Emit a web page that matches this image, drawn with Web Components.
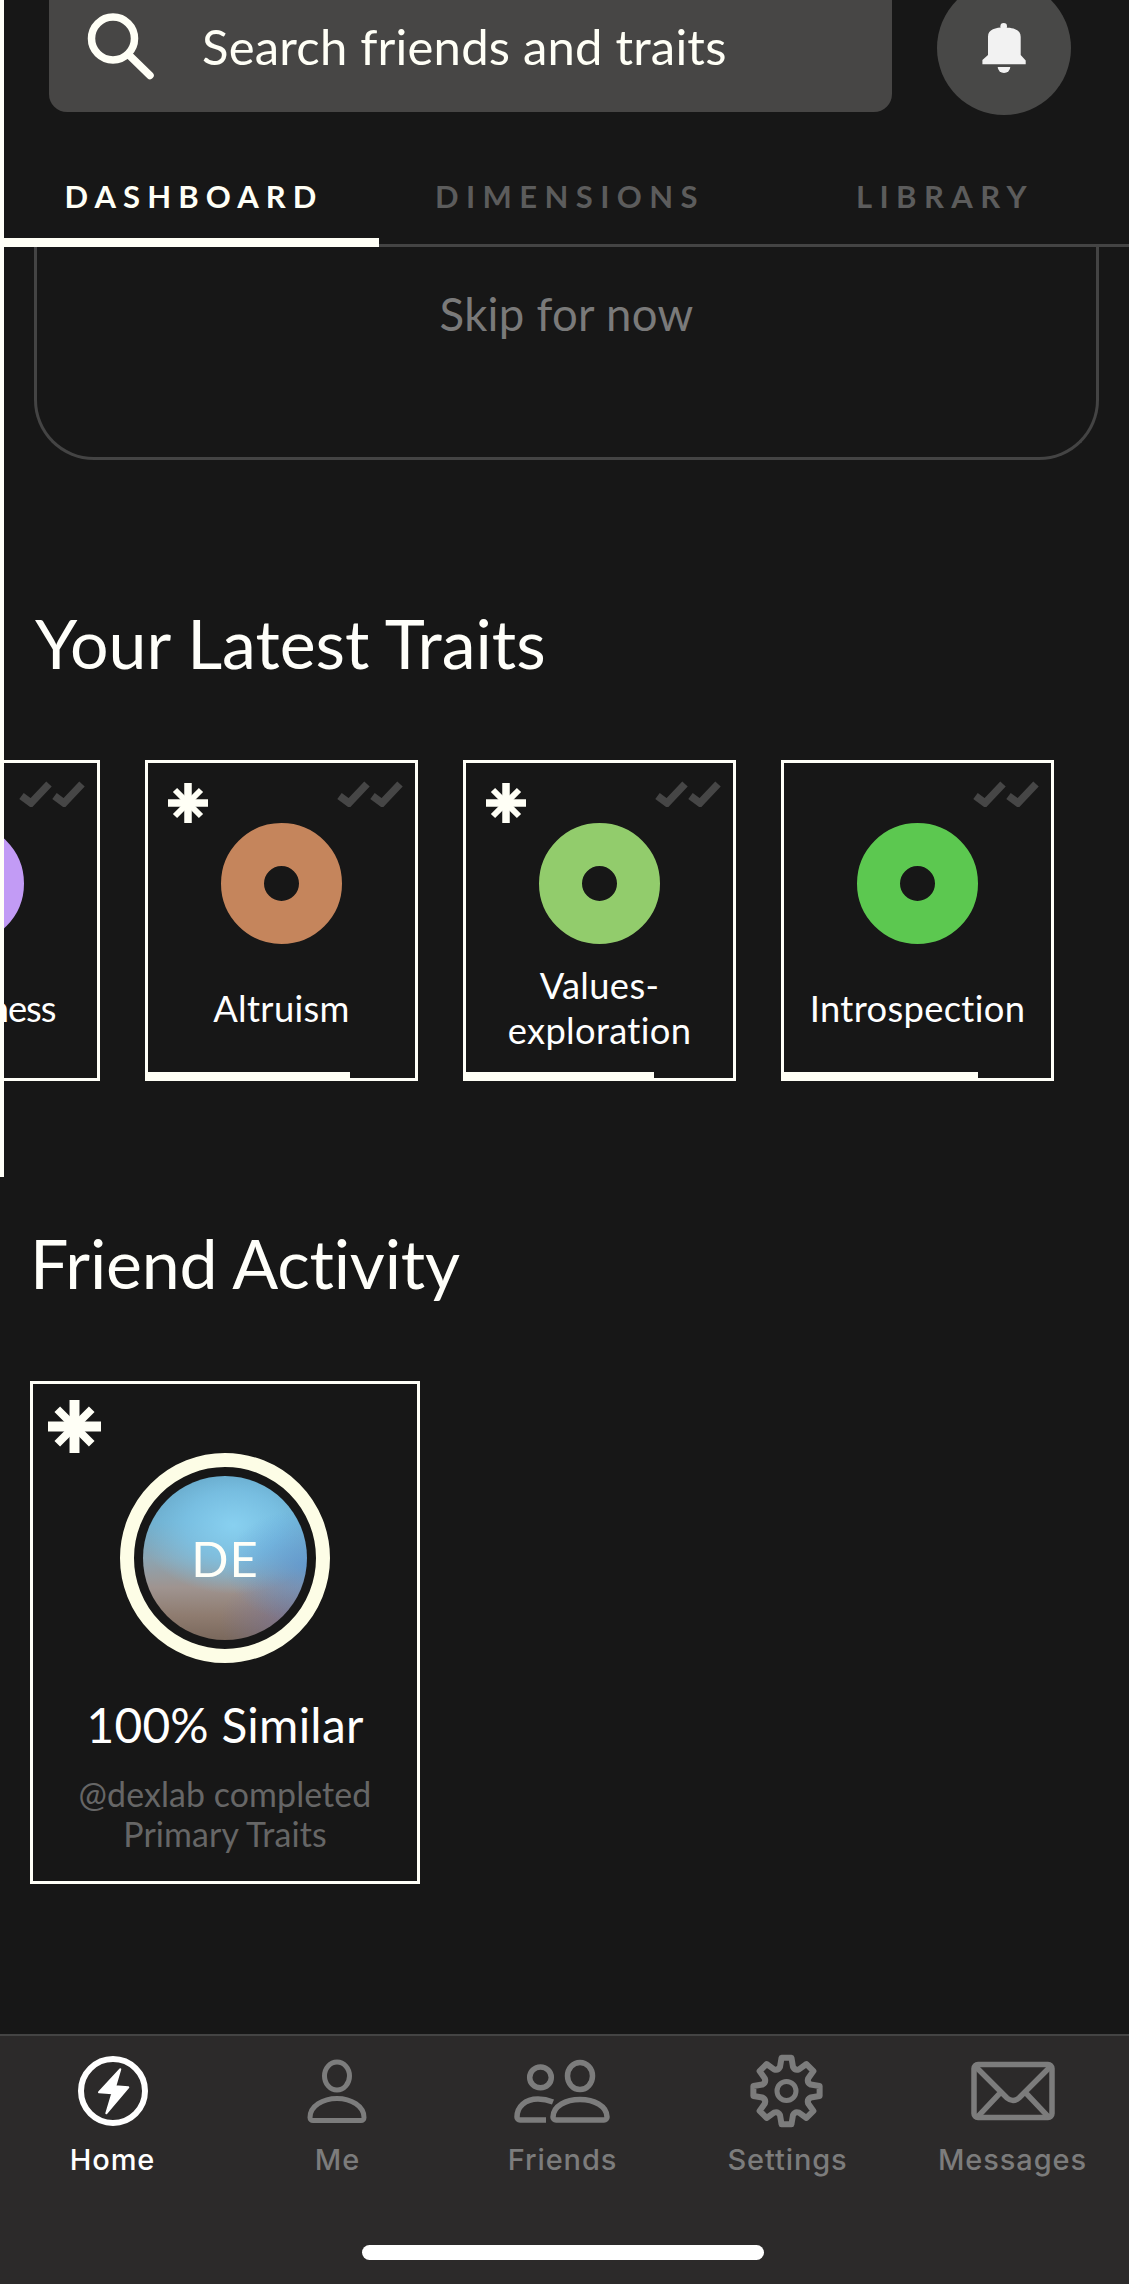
<!doctype html>
<html>
<head>
<meta charset="utf-8">
<title>Dashboard</title>
<style>
  html, body { margin: 0; height: 2284px; overflow: hidden; background: #171717; }
  body { font-family: Lato, "Liberation Sans", sans-serif; color: #fff; }
</style>
</head>
<body>
<top-panel>
  <search-header placeholder="Search friends and traits"></search-header>
  <tab-strip>
    <tab-link active>DASHBOARD</tab-link>
    <tab-link>DIMENSIONS</tab-link>
    <tab-link>LIBRARY</tab-link>
  </tab-strip>
  <skip-card>Skip for now</skip-card>
  <section-title style="margin:143px 0 0 31px">Your Latest Traits</section-title>
  <trait-row>
    <trait-card color="#c29bf5" progress="40"><span style="letter-spacing:-1px">Mindfulness</span></trait-card>
    <trait-card color="#c5855c" progress="76.8" star>Altruism</trait-card>
    <trait-card color="#92cc6c" progress="71.5" star>Values-exploration</trait-card>
    <trait-card color="#5cc850" progress="73.8">Introspection</trait-card>
  </trait-row>
</top-panel>
<section-title style="margin:46px 0 0 30px;letter-spacing:-.2px">Friend Activity</section-title>
<friend-card initials="DE" title-text="100% Similar">@dexlab completed Primary Traits</friend-card>
<nav-bar>
  <nav-item icon="home" active>Home</nav-item>
  <nav-item icon="me">Me</nav-item>
  <nav-item icon="friends">Friends</nav-item>
  <nav-item icon="settings">Settings</nav-item>
  <nav-item icon="messages">Messages</nav-item>
</nav-bar>

<script>
const STAR = `<svg viewBox="0 0 40 40" width="100%" height="100%" fill="none" stroke="#fffff6">
  <path stroke-width="7.5" d="M20 0V40M0 20H40"/>
  <path stroke-width="6" d="M7 7L33 33M33 7L7 33"/></svg>`;

function gearPath() {
  const pt = (deg, r) => {
    const a = (deg - 90) * Math.PI / 180;
    return `${(48.5 + r * Math.cos(a)).toFixed(2)} ${(38 + r * Math.sin(a)).toFixed(2)}`;
  };
  let d = '';
  for (let i = 0; i < 8; i++) {
    const t = i * 45;
    d += `${i ? 'Q' + pt(t - 22.5, 22) + ' ' : 'M'}${pt(t - 15, 25)}L${pt(t - 8.5, 33.5)}L${pt(t + 8.5, 33.5)}L${pt(t + 15, 25)}`;
  }
  return d + `Q${pt(-22.5, 22)} ${pt(-15, 25)}Z`;
}

const ICONS = {
  home: `<circle cx="40" cy="38" r="32" fill="none" stroke="currentColor" stroke-width="6"/>
    <path d="M47.3 16.3L26 39.3L39.3 40.3L33.3 60.3L55.3 34.3L42.3 33.3Z" fill="currentColor" stroke="currentColor" stroke-width="2" stroke-linejoin="round"/>`,
  me: `<g fill="none" stroke="currentColor" stroke-width="5">
    <ellipse cx="39" cy="23" rx="12.5" ry="14"/>
    <path d="M15 67.5H63a3 3 0 0 0 3-3C66 53 53 45.5 39 45.5S12 53 12 64.5a3 3 0 0 0 3 3Z"/></g>`,
  friends: `<g fill="none" stroke="currentColor" stroke-width="5.5">
    <ellipse cx="27.5" cy="24.4" rx="10.8" ry="10.4"/>
    <ellipse cx="67" cy="23" rx="12.5" ry="13.5"/>
    <path d="M43 67H91a3 3 0 0 0 3-3C94 53 81 46.5 67 46.5S40 53 40 64a3 3 0 0 0 3 3Z"/>
    <path d="M40 49C35 47 30 46 25 46C12 46 4 54 4 64a3 3 0 0 0 3 3H33"/></g>`,
  settings: `<g fill="none" stroke="currentColor" stroke-width="6" stroke-linejoin="round">
    <path d="${gearPath()}"/><circle cx="48.5" cy="38" r="9.5" stroke-width="5"/></g>`,
  messages: `<g fill="none" stroke="currentColor" stroke-width="5.5">
    <rect x="11" y="11.5" width="78" height="53" rx="4"/>
    <path d="M13 14L44 45q6 5 12 0L87 14M14.8 63.7L38.4 38.7M85.2 63.7L61.6 38.7"/></g>`
};

class TopPanel extends HTMLElement {
  connectedCallback() {
    this.attachShadow({ mode: 'open' }).innerHTML = `
      <style>
        :host { display: flex; flex-direction: column; height: 1177px; overflow: hidden;
          border-left: 4px solid #fffff8; box-sizing: border-box; background: #171717; }
      </style>
      <slot></slot>`;
  }
}

class SearchHeader extends HTMLElement {
  connectedCallback() {
    this.attachShadow({ mode: 'open' }).innerHTML = `
      <style>
        :host { display: flex; flex: none; gap: 45px; margin: -19px 0 0 45px; }
        .box { width: 843px; height: 131px; box-sizing: border-box; padding: 0 0 1px 35px;
          display: flex; align-items: center; gap: 38px; background: #474645; border-radius: 0 0 18px 18px;
          font-size: 49px; line-height: 59px; letter-spacing: .2px; color: #fffff6; }
        .box svg { margin-bottom: -1px; }
        .bell { width: 134px; height: 134px; border-radius: 50%; background: #484847;
          display: flex; align-items: center; justify-content: center; }
      </style>
      <div class="box">
        <svg width="80" height="80" viewBox="0 0 80 80" fill="none" stroke="#fffff6" stroke-width="7.5" stroke-linecap="round">
          <circle cx="29" cy="31.5" r="21.5"/><path d="M45 48L66 68.5"/>
        </svg>
        <span>${this.getAttribute('placeholder')}</span>
      </div>
      <div class="bell">
        <svg width="44" height="50" viewBox="0 0 44 50" fill="#f2f2f2">
          <circle cx="21.7" cy="3.3" r="3.3"/>
          <path d="M6 13.7C6 6 14 4.5 21.7 4.5C30 4.5 38.7 6 38.7 13.7V32L43.7 37.5V41.3H0.4V37L6 32Z"/>
          <path d="M15.7 44H28.3A6.3 6 0 0 1 15.7 44Z"/>
        </svg>
      </div>`;
  }
}

class TabStrip extends HTMLElement {
  connectedCallback() {
    this.attachShadow({ mode: 'open' }).innerHTML = `
      <style>:host { display: grid; grid-template-columns: repeat(3, 1fr); flex: none; height: 132px; }</style>
      <slot></slot>`;
  }
}

class TabLink extends HTMLElement {
  connectedCallback() {
    const active = this.hasAttribute('active');
    this.attachShadow({ mode: 'open' }).innerHTML = `
      <style>
        :host { display: flex; align-items: flex-end; justify-content: center; box-sizing: border-box;
          padding: 0 0 ${active ? 22 : 28}px ${active ? 5 : 7}px; border-bottom: ${active ? '9px solid #fffff6' : '3px solid #444'};
          font-size: 31px; line-height: 40px; font-weight: 700; letter-spacing: ${active ? 7.1 : 7.4}px;
          color: ${active ? '#fffff6' : '#5c5c5c'}; }
      </style>
      <slot></slot>`;
  }
}

class SkipCard extends HTMLElement {
  connectedCallback() {
    this.attachShadow({ mode: 'open' }).innerHTML = `
      <style>
        :host { display: block; flex: none; height: 213px; margin: 0 30px; box-sizing: border-box;
          border: 3px solid #444; border-top: 0; border-radius: 0 0 60px 60px; padding-top: 40px;
          text-align: center; font-size: 45.5px; line-height: 54px; letter-spacing: .3px; color: #7a7a7a; }
      </style>
      <slot></slot>`;
  }
}

class SectionTitle extends HTMLElement {
  connectedCallback() {
    this.attachShadow({ mode: 'open' }).innerHTML = `
      <style>:host { display: block; flex: none; font-size: 68px; line-height: 80px; color: #fffffa; }</style>
      <slot></slot>`;
  }
}

class TraitRow extends HTMLElement {
  connectedCallback() {
    this.attachShadow({ mode: 'open' }).innerHTML = `
      <style>:host { display: flex; flex: none; gap: 45px; margin: 77px 0 0 -177px; }</style>
      <slot></slot>`;
  }
}

class TraitCard extends HTMLElement {
  connectedCallback() {
    const color = this.getAttribute('color');
    const progress = this.getAttribute('progress');
    const star = this.hasAttribute('star') ? `<div class="star">${STAR}</div>` : '';
    this.attachShadow({ mode: 'open' }).innerHTML = `
      <style>
        :host { display: flex; flex: none; flex-direction: column; align-items: center; position: relative;
          box-sizing: border-box; width: 273px; height: 321px; border: 3px solid #fffff8; padding-bottom: 6px; }
        .star { position: absolute; left: 20px; top: 20px; width: 40px; height: 40px; }
        .checks { position: absolute; right: 12px; top: 18px; }
        .donut { width: 121px; height: 121px; margin-top: 60px; flex: none; box-sizing: border-box;
          border-radius: 50%; border: 43.5px solid ${color}; }
        .label { flex: 1; display: flex; align-items: center; text-align: center; padding: 0 18px;
          font-size: 36.3px; line-height: 45px; letter-spacing: .35px; color: #fff; }
        .bar { position: absolute; left: -3px; bottom: -3px; height: 9px; width: ${progress}%; background: #fffff6; }
      </style>
      ${star}
      <svg class="checks" width="66" height="26" viewBox="0 0 66 26" fill="none" stroke="#464646" stroke-width="7.5">
        <path d="M2.5 15L12 22L30 3M35.5 15L45 22L63 3"/>
      </svg>
      <div class="donut"></div>
      <div class="label"><span><slot></slot></span></div>
      <div class="bar"></div>`;
  }
}

class FriendCard extends HTMLElement {
  connectedCallback() {
    this.attachShadow({ mode: 'open' }).innerHTML = `
      <style>
        :host { display: flex; flex-direction: column; align-items: center; position: relative;
          box-sizing: border-box; width: 390px; height: 503px; margin: 78px 0 0 30px;
          border: 3px solid #fffff8; padding: 69px 24px 0; text-align: center; }
        .star { position: absolute; left: 15px; top: 16px; width: 53px; height: 53px; }
        .ring { width: 210px; height: 210px; box-sizing: border-box; border: 14px solid #fdfde6; border-radius: 50%;
          padding: 9px; flex: none; }
        .avatar { width: 164px; height: 164px; border-radius: 50%; display: flex; align-items: center; justify-content: center;
          font-size: 49px; color: #fffff8; letter-spacing: 1px;
          background:
            radial-gradient(ellipse 50% 35% at 100% 55%, rgba(85,150,215,.75), transparent),
            radial-gradient(ellipse 45% 30% at 92% 88%, rgba(110,110,165,.55), transparent),
            radial-gradient(ellipse 58% 42% at 55% 30%, #88d0f0 0%, rgba(125,198,234,.75) 50%, rgba(110,170,200,0) 100%),
            linear-gradient(180deg, #5f9fbf 0%, #6dabc9 28%, #8ba5b3 50%, #9f9490 68%, #8f7c70 85%, #7a685c 100%); }
        .title { font-size: 47.8px; line-height: 58px; margin-top: 33px; letter-spacing: .25px; color: #fff; }
        .sub { font-size: 33.9px; line-height: 40px; margin-top: 20px; letter-spacing: .1px; color: #666; }
      </style>
      <div class="star">${STAR}</div>
      <div class="ring"><div class="avatar">${this.getAttribute('initials')}</div></div>
      <div class="title">${this.getAttribute('title-text')}</div>
      <div class="sub"><slot></slot></div>`;
  }
}

class NavBar extends HTMLElement {
  connectedCallback() {
    this.attachShadow({ mode: 'open' }).innerHTML = `
      <style>
        :host { display: block; height: 250px; box-sizing: border-box; margin-top: 150px; padding-top: 17px;
          background: #2c2a2a; border-top: 2px solid #444; }
        .items { display: grid; grid-template-columns: repeat(5, 225px); }
        .home-indicator { width: 402px; height: 15px; margin: 68px 0 0 362px; border-radius: 8px; background: #fff; }
      </style>
      <div class="items"><slot></slot></div>
      <div class="home-indicator"></div>`;
  }
}

class NavItem extends HTMLElement {
  connectedCallback() {
    const active = this.hasAttribute('active');
    const name = this.getAttribute('icon');
    const w = active || name === 'me' ? 80 : 100;
    this.attachShadow({ mode: 'open' }).innerHTML = `
      <style>
        :host { display: flex; flex-direction: column; align-items: center; color: ${active ? '#fff' : '#7c7c7c'};
          font-family: Inter, "Liberation Sans", sans-serif; font-weight: 500; font-size: 29px; line-height: 35px; letter-spacing: .9px; }
        svg { display: block; flex: none; margin-bottom: 13px; }
      </style>
      <svg width="${w}" height="76" viewBox="0 0 ${w} 76">${ICONS[name]}</svg>
      <slot></slot>`;
  }
}

customElements.define('top-panel', TopPanel);
customElements.define('search-header', SearchHeader);
customElements.define('tab-strip', TabStrip);
customElements.define('tab-link', TabLink);
customElements.define('skip-card', SkipCard);
customElements.define('section-title', SectionTitle);
customElements.define('trait-row', TraitRow);
customElements.define('trait-card', TraitCard);
customElements.define('friend-card', FriendCard);
customElements.define('nav-bar', NavBar);
customElements.define('nav-item', NavItem);
</script>
</body>
</html>
